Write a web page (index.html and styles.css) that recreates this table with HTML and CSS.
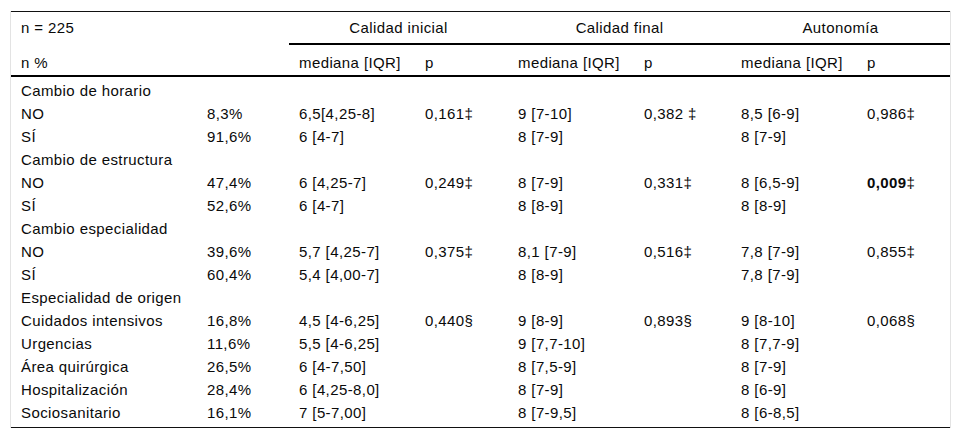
FILE: index.html
```html
<!DOCTYPE html>
<html lang="es">
<head>
<meta charset="utf-8">
<title>Tabla</title>
<link rel="stylesheet" href="styles.css">
</head>
<body>
<div class="frame">
<table class="data">
<colgroup>
<col class="c1"><col class="c2"><col class="c3"><col class="c4"><col class="c5"><col class="c6"><col class="c7"><col class="c8">
</colgroup>
<thead>
<tr class="groups">
<th class="left">n = 225</th>
<th></th>
<th class="group" colspan="2">Calidad inicial</th>
<th class="group" colspan="2">Calidad final</th>
<th class="group" colspan="2">Autonomía</th>
</tr>
<tr class="subs">
<th>n %</th>
<th></th>
<th>mediana [IQR]</th>
<th>p</th>
<th>mediana [IQR]</th>
<th>p</th>
<th>mediana [IQR]</th>
<th>p</th>
</tr>
</thead>
<tbody>
<tr><td>Cambio de horario</td><td></td><td></td><td></td><td></td><td></td><td></td><td></td></tr>
<tr><td>NO</td><td>8,3%</td><td>6,5[4,25-8]</td><td>0,161‡</td><td>9 [7-10]</td><td>0,382 ‡</td><td>8,5 [6-9]</td><td>0,986‡</td></tr>
<tr><td>SÍ</td><td>91,6%</td><td>6 [4-7]</td><td></td><td>8 [7-9]</td><td></td><td>8 [7-9]</td><td></td></tr>
<tr><td>Cambio de estructura</td><td></td><td></td><td></td><td></td><td></td><td></td><td></td></tr>
<tr><td>NO</td><td>47,4%</td><td>6 [4,25-7]</td><td>0,249‡</td><td>8 [7-9]</td><td>0,331‡</td><td>8 [6,5-9]</td><td><b>0,009</b>‡</td></tr>
<tr><td>SÍ</td><td>52,6%</td><td>6 [4-7]</td><td></td><td>8 [8-9]</td><td></td><td>8 [8-9]</td><td></td></tr>
<tr><td>Cambio especialidad</td><td></td><td></td><td></td><td></td><td></td><td></td><td></td></tr>
<tr><td>NO</td><td>39,6%</td><td>5,7 [4,25-7]</td><td>0,375‡</td><td>8,1 [7-9]</td><td>0,516‡</td><td>7,8 [7-9]</td><td>0,855‡</td></tr>
<tr><td>SÍ</td><td>60,4%</td><td>5,4 [4,00-7]</td><td></td><td>8 [8-9]</td><td></td><td>7,8 [7-9]</td><td></td></tr>
<tr><td>Especialidad de origen</td><td></td><td></td><td></td><td></td><td></td><td></td><td></td></tr>
<tr><td>Cuidados intensivos</td><td>16,8%</td><td>4,5 [4-6,25]</td><td>0,440§</td><td>9 [8-9]</td><td>0,893§</td><td>9 [8-10]</td><td>0,068§</td></tr>
<tr><td>Urgencias</td><td>11,6%</td><td>5,5 [4-6,25]</td><td></td><td>9 [7,7-10]</td><td></td><td>8 [7,7-9]</td><td></td></tr>
<tr><td>Área quirúrgica</td><td>26,5%</td><td>6 [4-7,50]</td><td></td><td>8 [7,5-9]</td><td></td><td>8 [7-9]</td><td></td></tr>
<tr><td>Hospitalización</td><td>28,4%</td><td>6 [4,25-8,0]</td><td></td><td>8 [7-9]</td><td></td><td>8 [6-9]</td><td></td></tr>
<tr><td>Sociosanitario</td><td>16,1%</td><td>7 [5-7,00]</td><td></td><td>8 [7-9,5]</td><td></td><td>8 [6-8,5]</td><td></td></tr>
</tbody>
</table>
</div>
</body>
</html>
```

FILE: styles.css
```css
html, body {
  margin: 0;
  padding: 0;
  background: #fff;
}

.frame {
  margin: 11px 0 0 10px;
  width: 939px;
  border-left: 1px solid #e3e3e3;
  border-right: 1px solid #e3e3e3;
}

.data {
  width: 939px;
  table-layout: fixed;
  border-collapse: separate;
  border-spacing: 0;
  border-top: 1px solid #111;
  border-bottom: 1px solid #111;
  font-family: "Liberation Sans", Arial, sans-serif;
  font-size: 15px;
  letter-spacing: 0.4px;
  color: #0a0a0a;
}

.c1 { width: 186px; }
.c2 { width: 92px; }
.c3 { width: 126px; }
.c4 { width: 93px; }
.c5 { width: 126px; }
.c6 { width: 97px; }
.c7 { width: 126px; }
.c8 { width: 93px; }

.data th,
.data td {
  padding: 0 0 0 10px;
  text-align: left;
  font-weight: normal;
  white-space: nowrap;
  vertical-align: top;
}

.groups th {
  line-height: 17px;
  padding-top: 7px;
  padding-bottom: 7px;
}

.groups th.group {
  text-align: center;
  padding-left: 0;
  border-bottom: 2px solid #000;
}

.subs th {
  line-height: 17px;
  padding-top: 9px;
  padding-bottom: 4px;
  border-bottom: 2px solid #000;
}

.data td {
  line-height: 23px;
}

.data tbody tr:first-child td {
  padding-top: 2px;
}

.data tbody tr:last-child td {
  padding-bottom: 3px;
}

.data b {
  font-weight: bold;
}
```
